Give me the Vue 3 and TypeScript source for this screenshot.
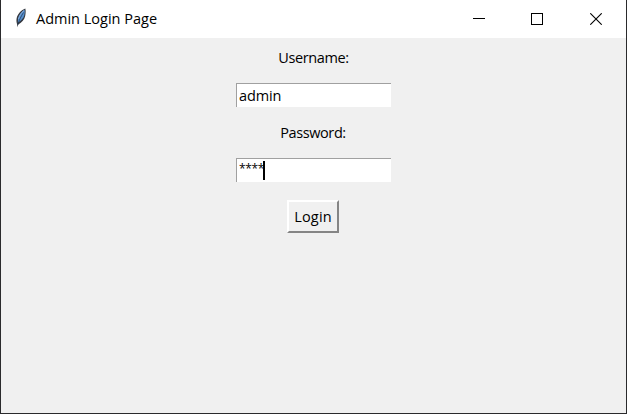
<script setup lang="ts">
import { ref } from 'vue'

const username = ref('admin')
const password = ref('1234')
</script>

<template>
  <div class="window">
    <header class="titlebar">
      <svg class="feather" width="16" height="20" viewBox="0 0 16 20">
        <path d="M12.3 .6C8.5 2 4.5 6 3.600 10.500C3.200 13 3.600 15 4.200 16.300L4 19.300L5.300 16.500C9 14.600 11.500 11.500 12.200 8C12.800 5 12.800 2.500 12.300 .6Z" fill="#34383f" />
        <path d="M11.500 1.800C8.500 4 6 7 5 11.500L4.800 14.800C8.300 12.500 10.600 10 11.300 7.200C11.800 5 11.900 3.500 11.500 1.800Z" fill="#5590d0" />
        <path d="M10.500 4.500C8.300 8 6.300 11.500 4.600 17" fill="none" stroke="#20344f" stroke-width=".7" />
        <path d="M11 2.500C8.300 4.500 6.300 7.500 5.400 11" fill="none" stroke="#8bb2e2" stroke-width=".9" />
      </svg>
      <h1 class="title">Admin Login Page</h1>
      <div class="controls">
        <svg width="12" height="12" shape-rendering="crispEdges"><path d="M0 5.500H12" stroke="#000" /></svg>
        <svg width="12" height="12" shape-rendering="crispEdges"><rect x=".5" y=".5" width="11" height="11" fill="none" stroke="#000" /></svg>
        <svg class="close" width="12" height="12"><path d="M.3 .3L11.700 11.700M11.700 .3L.3 11.700" stroke="#000" stroke-width="1.100" /></svg>
      </div>
    </header>
    <main class="form">
      <div class="label user">Username:</div>
      <div class="entry"><span class="value">{{ username }}</span></div>
      <div class="label pass">Password:</div>
      <div class="entry second"><span class="value stars">{{ '*'.repeat(password.length) }}</span><i class="caret"></i></div>
      <button class="login" type="button"><span>Login</span></button>
    </main>
  </div>
</template>

<style>
body { margin: 0; }
</style>

<style scoped>
.window {
  box-sizing: border-box;
  width: 627px;
  height: 414px;
  border: 1px solid #2a2a2c;
  border-top: 0;
  background: #f0f0f0;
  font-family: "Open Sans", "Noto Sans", sans-serif;
  color: #000;
  overflow: hidden;
}
.titlebar {
  display: flex;
  height: 38px;
  box-sizing: border-box;
  padding-left: 12px;
  background: #fff;
}
.feather { margin-top: 8px; flex: none; }
.title {
  margin: 9px 0 0 7px;
  font-size: 14.5px;
  line-height: 20px;
  font-weight: 400;
  white-space: nowrap;
}
.controls {
  display: flex;
  gap: 46px;
  margin: 13px 24px 0 auto;
}
.close { margin-left: 1px; }
.form {
  display: flex;
  flex-direction: column;
  align-items: center;
  padding-top: 10px;
}
.label {
  height: 20px;
  font-size: 14.5px;
  line-height: 20px;
  letter-spacing: -.4px;
  white-space: nowrap;
}
.pass { margin-right: 1px; }
.entry {
  box-sizing: border-box;
  display: flex;
  width: 155px;
  height: 24px;
  margin: 15px 0 16px;
  padding-left: 2px;
  background: #fff;
  border-top: 1px solid #a0a0a0;
  border-left: 1px solid #a0a0a0;
}
.value { font-size: 14.5px; line-height: 23px; letter-spacing: -.1px; }
.stars {
  width: 24px;
  font-size: 12px;
  line-height: 20px;
  letter-spacing: -.4px;
}
.caret { width: 2px; height: 19px; margin-top: 2px; background: #000; }
.second { margin-bottom: 17px; }
.login {
  box-sizing: border-box;
  width: 52px;
  height: 33px;
  margin-top: 1px;
  margin-right: 1px;
  padding: 0;
  border: 2px solid;
  border-color: #fff #858585 #858585 #fff;
  background: #f0f0f0;
  font: 14.5px/26px "Open Sans", "Noto Sans", sans-serif;
  letter-spacing: .2px;
  color: #000;
  white-space: nowrap;
}
</style>
